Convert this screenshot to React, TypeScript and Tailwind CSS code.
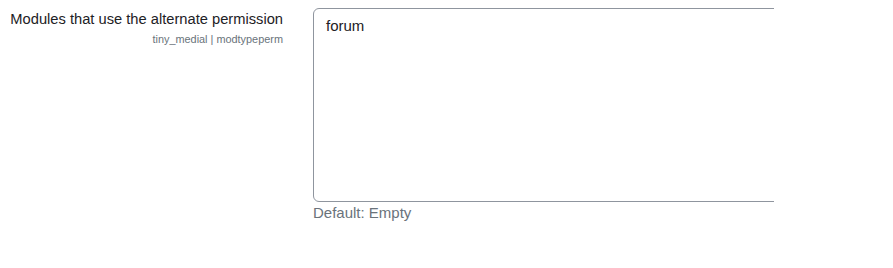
export default function App() {
  return (
    <div className="flex bg-white min-h-[268px] pt-[8px] font-['Liberation_Sans',Arial,sans-serif]">
      <div className="w-[298px] pr-[15px] text-right">
        <div className="text-[14.7px] leading-[22px] text-[#1d2125]">Modules that use the alternate permission</div>
        <div className="text-[10.9px] leading-[14px] text-[#6a737b] mt-[2px]">tiny_medial | modtypeperm</div>
      </div>
      <div className="pl-[15px]">
        <div className="w-[461px] overflow-hidden">
          <textarea
            className="block w-[600px] h-[194px] border border-[#8f959e] rounded-[6px] px-[12px] pt-[6px] pb-[8px] text-[15px] leading-[22px] text-[#1d2125] resize-none outline-none"
            defaultValue="forum"
          />
        </div>
        <div className="text-[15px] leading-[22px] text-[#6a737b]">Default: Empty</div>
      </div>
    </div>
  );
}
